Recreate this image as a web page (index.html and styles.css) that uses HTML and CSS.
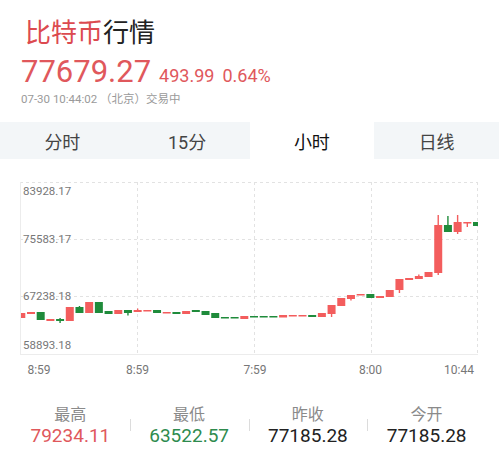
FILE: index.html
```
<!DOCTYPE html>
<html lang="zh">
<head>
    <meta charset="UTF-8">
    <meta name="viewport" content="width=device-width, initial-scale=1.0">
    <title>比特币行情</title>
    <link rel="stylesheet" href="styles.css">
</head>
<body>
    <div class="header">
        <h1 class="title"><span class="coin">比特币</span>行情</h1>
        <div class="price-row">
            <span class="price">77679.27</span>
            <span class="change">493.99</span>
            <span class="change">0.64%</span>
        </div>
        <div class="stamp">07-30 10:44:02 （北京）交易中</div>
    </div>

    <div class="tabs">
        <div class="tab">分时</div>
        <div class="tab">15分</div>
        <div class="tab active">小时</div>
        <div class="tab">日线</div>
    </div>

    <svg class="chart" id="chart" width="499" height="205" viewBox="0 175 499 205">
        <defs>
            <clipPath id="plot"><rect x="21" y="181" width="457" height="172"/></clipPath>
        </defs>
        <g class="grid">
            <line x1="20" y1="181.5" x2="478" y2="181.5"/>
            <line x1="20" y1="238.5" x2="478" y2="238.5"/>
            <line x1="20" y1="295.5" x2="478" y2="295.5"/>
            <line x1="137.5" y1="181" x2="137.5" y2="353"/>
            <line x1="254.5" y1="181" x2="254.5" y2="353"/>
            <line x1="371.5" y1="181" x2="371.5" y2="353"/>
            <line x1="477.5" y1="181" x2="477.5" y2="353"/>
        </g>
        <g class="frame">
            <line x1="20.5" y1="181" x2="20.5" y2="353.5"/>
            <line x1="20" y1="353.5" x2="478" y2="353.5"/>
        </g>
        <g id="candles" clip-path="url(#plot)"></g>
        <g class="axis">
            <text x="23" y="190">83928.17</text>
            <text x="23" y="238">75583.17</text>
            <text x="23" y="295">67238.18</text>
            <text x="23" y="344">58893.18</text>
        </g>
        <g class="axis time">
            <text x="39" y="369">8:59</text>
            <text x="137.5" y="369">8:59</text>
            <text x="255" y="369">7:59</text>
            <text x="370.5" y="369">8:00</text>
            <text x="459" y="369">10:44</text>
        </g>
    </svg>

    <div class="stats">
        <div class="stat">
            <div class="label">最高</div>
            <div class="value up">79234.11</div>
        </div>
        <div class="stat">
            <div class="label">最低</div>
            <div class="value down">63522.57</div>
        </div>
        <div class="stat">
            <div class="label">昨收</div>
            <div class="value">77185.28</div>
        </div>
        <div class="stat">
            <div class="label">今开</div>
            <div class="value">77185.28</div>
        </div>
    </div>

    <script>
        // [top, bottom, wickTop, wickBottom, up]
        const bars = [
            [312, 317, 0, 0, 1], [311, 313, 0, 0, 1], [311, 319, 0, 0, 0], [318, 320, 0, 0, 1],
            [318, 320, 317, 322, 0], [306, 320, 0, 0, 1], [306, 312, 305, 0, 0], [301, 312, 0, 0, 1],
            [301, 312, 0, 0, 0], [310, 313, 0, 0, 0], [309, 313, 0, 0, 1], [309, 312, 0, 314.5, 0],
            [309, 311, 307.5, 0, 1], [309, 310.5, 0, 0, 1], [309, 312, 0, 0, 0], [311, 312.5, 0, 0, 1],
            [311, 313, 0, 0, 0], [310, 313, 0, 0, 1], [309, 311, 0, 0, 0], [310, 314, 0, 0, 0],
            [312, 317, 0, 0, 0], [316, 317.5, 0, 0, 0], [316, 317.5, 0, 0, 0], [315, 318, 0, 0, 1],
            [315, 316.5, 0, 0, 0], [315, 316.5, 0, 0, 0], [315, 316.5, 0, 0, 0], [314, 316.5, 0, 0, 1],
            [314, 315.5, 0, 0, 1], [314, 315.5, 0, 0, 1], [314, 316, 0, 0, 0], [312, 316, 0, 0, 1],
            [304, 313, 0, 316, 1], [297, 305, 0, 0, 1], [294, 298, 0, 299.5, 1], [293, 294.5, 0, 0, 1],
            [293, 297, 0, 0, 0], [295, 297, 0, 0, 1], [289, 296, 0, 0, 1], [278, 289, 0, 292, 1],
            [277, 279, 0, 0, 1], [275, 278, 273.5, 0, 1], [271, 276, 0, 0, 1], [224, 272, 214, 274, 1],
            [224, 231, 215, 0, 0], [221, 231, 214, 233, 1], [221, 222.5, 0, 226, 1], [221, 225, 0, 0, 0]
        ];

        const ns = 'http://www.w3.org/2000/svg';
        const group = document.getElementById('candles');

        bars.forEach(function (b, i) {
            const x = 17.3 + i * 9.696;
            const color = b[4] ? '#f35d5d' : '#1f8b3b';
            const top = b[2] || b[0];
            const bottom = b[3] || b[1];

            if (top < b[0] || bottom > b[1]) {
                const wick = document.createElementNS(ns, 'line');
                wick.setAttribute('x1', x + 4);
                wick.setAttribute('x2', x + 4);
                wick.setAttribute('y1', top);
                wick.setAttribute('y2', bottom);
                wick.setAttribute('stroke', color);
                wick.setAttribute('stroke-width', '1.4');
                group.appendChild(wick);
            }

            const body = document.createElementNS(ns, 'rect');
            body.setAttribute('x', x);
            body.setAttribute('y', b[0]);
            body.setAttribute('width', 8);
            body.setAttribute('height', Math.max(b[1] - b[0], 1.5));
            body.setAttribute('fill', color);
            group.appendChild(body);
        });
    </script>
</body>
</html>
```

FILE: styles.css
```
* {
    margin: 0;
    padding: 0;
    box-sizing: border-box;
}

body {
    font-family: Roboto, "Noto Sans CJK SC", sans-serif;
    background: #ffffff;
    color: #222;
    width: 499px;
    overflow: hidden;
}

.header {
    padding: 14px 0 0 25px;
}

.title {
    font-family: "Noto Sans CJK SC", sans-serif;
    font-size: 26px;
    font-weight: 400;
    line-height: 34px;
    color: #222;
}

.coin {
    color: #dc4a4f;
}

.price-row {
    margin: 6px 0 0 -4px;
    height: 36px;
    line-height: 36px;
    color: #e0585c;
}

.price {
    font-size: 31px;
    margin-right: 4px;
}

.change {
    font-size: 18px;
    margin-right: 4px;
}

.stamp {
    margin: 2px 0 0 -4px;
    height: 14px;
    font-size: 11.5px;
    line-height: 14px;
    color: #9a9a9a;
}

.tabs {
    margin-top: 16px;
    display: grid;
    grid-template-columns: repeat(4, 1fr);
    height: 37px;
    background: #f3f6f8;
}

.tab {
    display: flex;
    align-items: center;
    justify-content: center;
    font-family: Roboto, "Noto Sans CJK SC", sans-serif;
    font-size: 18px;
    color: #444;
}

.tab.active {
    background: #ffffff;
    color: #111;
}

.chart {
    display: block;
    margin-top: 17px;
}

.grid line {
    stroke: #e2e2e2;
    stroke-width: 1;
    stroke-dasharray: 3 3;
}

.frame line {
    stroke: #ececec;
    stroke-width: 1;
}

.axis text {
    font-family: Roboto, sans-serif;
    font-size: 11.5px;
    fill: #777;
    dominant-baseline: central;
}

.axis.time text {
    text-anchor: middle;
    font-size: 12px;
}

.stats {
    margin: 21px 13px 0 11px;
    display: grid;
    grid-template-columns: repeat(4, 1fr);
}

.stat {
    position: relative;
    text-align: center;
}

.stat + .stat::before {
    content: "";
    position: absolute;
    left: 0;
    top: 17px;
    height: 12px;
    border-left: 1px solid #dcdcdc;
}

.label {
    font-family: "Noto Sans CJK SC", sans-serif;
    font-size: 16px;
    line-height: 22px;
    color: #8a8a8a;
}

.value {
    font-size: 19px;
    line-height: 24px;
    color: #222;
}

.value.up {
    color: #e0585c;
}

.value.down {
    color: #2e8b4e;
}
```
